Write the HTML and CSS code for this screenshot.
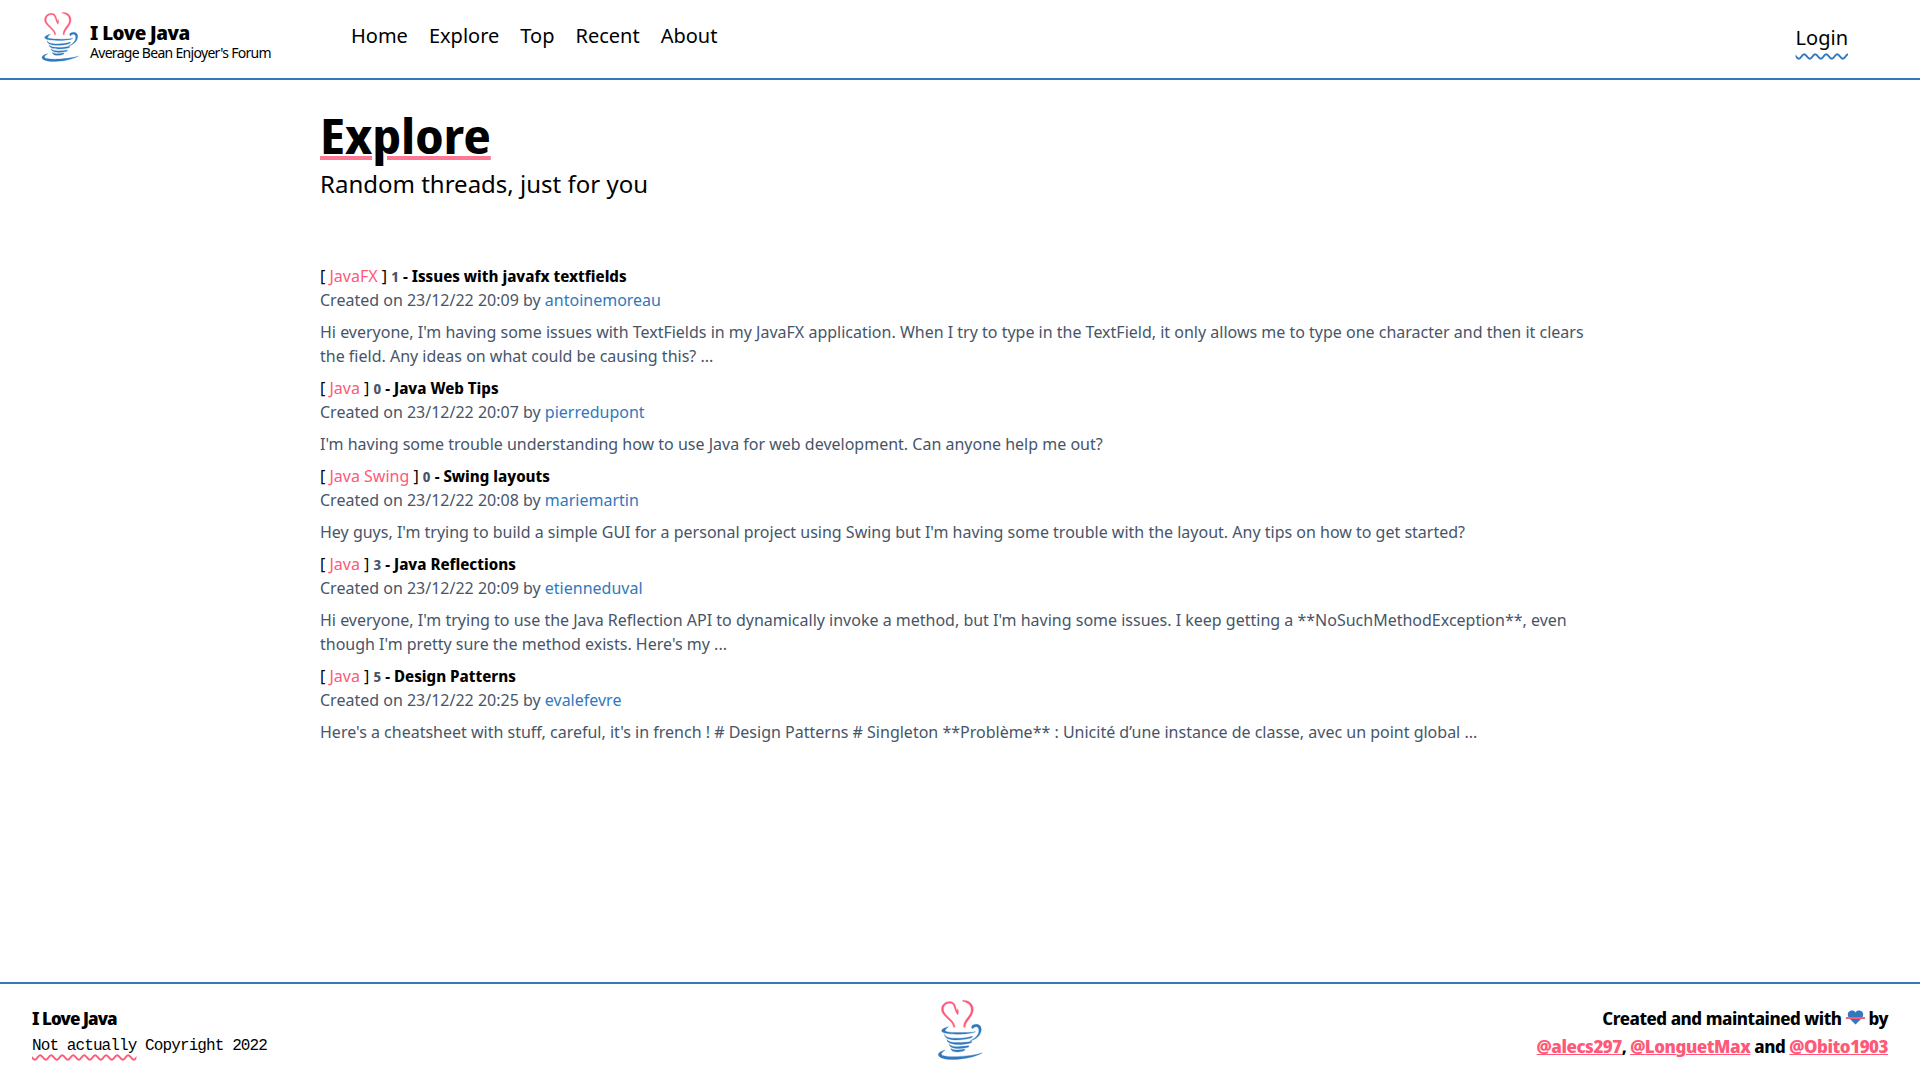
FILE: index.html
```
<!DOCTYPE html>
<html lang="en">
<head>
<meta charset="utf-8">
<meta name="viewport" content="width=device-width, initial-scale=1">
<title>I Love Java</title>
<link rel="stylesheet" href="styles.css">
</head>
<body>
<svg class="defs" aria-hidden="true">
  <symbol id="cup" viewBox="56 90 136 178">
    <g class="heart">
      <path d="M98 95C82 93 68 103 69 120C70 138 104 152 105 171L109 171C109 149 77 138 75 120C74 106 84 98 97 100C109 102 106 122 117 134C121 126 119 120 117 116L115 124C112 112 110 97 98 95Z"/>
      <path d="M132 91C151 91 166 103 163 122C160 143 141 151 139 171L135 171C133 149 156 139 157 121C158 105 148 98 132 94Z"/>
    </g>
    <g class="coffee">
      <path d="M90 169C76 172 68 177 70 183C74 194 151 194 170 184C148 188 80 188 80 181C80 177 85 173 90 169Z"/>
      <path d="M161 165C176 158 188 165 187 178C186 195 171 207 154 211C172 203 181 191 180 178C179 168 171 166 162 174C158 177 157 169 161 165Z"/>
      <path d="M78 192C82 207 129 206 159 198C164 196 160 202 156 203C122 212 78 211 78 192Z"/>
      <path d="M85 207C92 220 130 217 157 213C163 213 158 217 153 218C123 225 85 223 85 207Z"/>
      <path d="M92 221C99 231 126 229 148 226C154 226 150 230 145 231C120 236 94 235 92 221Z"/>
      <path d="M97 234C106 240 120 239 137 236C142 237 137 240 131 242C115 246 98 245 97 234Z"/>
      <path d="M80 239C63 242 55 251 63 258C83 273 154 267 190 247C159 257 83 263 70 253C66 248 73 243 80 239Z"/>
    </g>
  </symbol>
</svg>

<header class="site-header">
  <a class="brand" href="#">
    <svg class="brand-logo" aria-hidden="true"><use href="#cup"/></svg>
    <span class="brand-text">
      <span class="brand-name">I Love Java</span>
      <span class="brand-tagline">Average Bean Enjoyer's Forum</span>
    </span>
  </a>
  <nav class="main-nav">
    <a href="#">Home</a>
    <a href="#">Explore</a>
    <a href="#">Top</a>
    <a href="#">Recent</a>
    <a href="#">About</a>
  </nav>
  <a class="login" href="#">Login</a>
</header>

<main class="content">
  <h1 class="page-title">Explore</h1>
  <p class="page-subtitle">Random threads, just for you</p>

  <section class="threads">
    <article class="thread">
      <h2 class="thread-head">[ <a class="tag" href="#">JavaFX</a> ] <span class="count">1</span> <a class="thread-title" href="#">- Issues with javafx textfields</a></h2>
      <p class="meta">Created on 23/12/22 20:09 by <a href="#">antoinemoreau</a></p>
      <p class="excerpt">Hi everyone, I'm having some issues with TextFields in my JavaFX application. When I try to type in the TextField, it only allows me to type one character and then it clears the field. Any ideas on what could be causing this? ...</p>
    </article>
    <article class="thread">
      <h2 class="thread-head">[ <a class="tag" href="#">Java</a> ] <span class="count">0</span> <a class="thread-title" href="#">- Java Web Tips</a></h2>
      <p class="meta">Created on 23/12/22 20:07 by <a href="#">pierredupont</a></p>
      <p class="excerpt">I'm having some trouble understanding how to use Java for web development. Can anyone help me out?</p>
    </article>
    <article class="thread">
      <h2 class="thread-head">[ <a class="tag" href="#">Java Swing</a> ] <span class="count">0</span> <a class="thread-title" href="#">- Swing layouts</a></h2>
      <p class="meta">Created on 23/12/22 20:08 by <a href="#">mariemartin</a></p>
      <p class="excerpt">Hey guys, I'm trying to build a simple GUI for a personal project using Swing but I'm having some trouble with the layout. Any tips on how to get started?</p>
    </article>
    <article class="thread">
      <h2 class="thread-head">[ <a class="tag" href="#">Java</a> ] <span class="count">3</span> <a class="thread-title" href="#">- Java Reflections</a></h2>
      <p class="meta">Created on 23/12/22 20:09 by <a href="#">etienneduval</a></p>
      <p class="excerpt">Hi everyone, I'm trying to use the Java Reflection API to dynamically invoke a method, but I'm having some issues. I keep getting a **NoSuchMethodException**, even though I'm pretty sure the method exists. Here's my ...</p>
    </article>
    <article class="thread">
      <h2 class="thread-head">[ <a class="tag" href="#">Java</a> ] <span class="count">5</span> <a class="thread-title" href="#">- Design Patterns</a></h2>
      <p class="meta">Created on 23/12/22 20:25 by <a href="#">evalefevre</a></p>
      <p class="excerpt">Here's a cheatsheet with stuff, careful, it's in french ! # Design Patterns # Singleton **Problème** : Unicité d’une instance de classe, avec un point global ...</p>
    </article>
  </section>
</main>

<footer class="site-footer">
  <div class="legal">
    <p class="legal-name">I Love Java</p>
    <p class="copyright"><span class="wavy">Not actually</span> Copyright 2022</p>
  </div>
  <svg class="footer-logo" aria-hidden="true"><use href="#cup"/></svg>
  <div class="credits">
    <p>Created and maintained with
      <svg class="love" viewBox="0 0 19 15" role="img" aria-label="love"><path class="love-heart" d="M9.500 14.500L3 8C1 5.500 1.500 2 4 1C6 0 8.500 .5 9.500 2.500C10.500 .5 13 0 15 1C17.500 2 18 5.500 16 8Z"/><path class="love-strike" d="M0 7h19v2H0z"/></svg>
      by</p>
    <p><a href="#">@alecs297</a>, <a href="#">@LonguetMax</a> and <a href="#">@Obito1903</a></p>
  </div>
</footer>
</body>
</html>
```
FILE: styles.css
```
:root {
  --blue: #3178bd;
  --pink: #ff5879;
  --slate: #475569;
  --display: "Noto Sans Display", "Noto Sans", sans-serif;
}

* { box-sizing: border-box; }

body {
  margin: 0;
  min-height: 100vh;
  display: flex;
  flex-direction: column;
  background: #fff;
  color: #000;
  font-family: "Noto Sans", sans-serif;
  font-size: 16px;
  line-height: 24px;
}

h1, h2, p { margin: 0; }
a { color: inherit; text-decoration: none; }

.defs { position: absolute; width: 0; height: 0; }
.heart { fill: var(--pink); stroke: var(--pink); }
.coffee { fill: var(--blue); stroke: var(--blue); }

.site-header {
  display: flex;
  align-items: flex-start;
  padding: 12px 72px 16px 40px;
  border-bottom: 2px solid var(--blue);
}
.brand { display: flex; width: 311px; gap: 10px; }
.brand-logo { width: 40px; height: 50px; }
.brand-text { display: flex; flex-direction: column; padding-top: 9px; }
.brand-name { font-family: var(--display); font-size: 20px; font-weight: 800; line-height: 24px; letter-spacing: -0.025em; }
.brand-tagline { font-size: 14px; line-height: 16px; letter-spacing: -0.05em; }
.main-nav { display: flex; gap: 21px; padding-top: 10px; font-size: 20px; line-height: 28px; }
.login {
  margin-left: auto;
  padding-top: 12px;
  font-size: 20px;
  line-height: 28px;
  text-decoration: underline wavy var(--blue) 2px;
  text-underline-offset: 8px;
}

.content {
  flex: 1;
  width: 100%;
  max-width: 1280px;
  margin: 0 auto;
  padding: 32px 0;
}
.page-title {
  font-family: var(--display);
  font-size: 48px;
  line-height: 48px;
  font-weight: 700;
  text-decoration: underline #ff7893 4px;
}
.page-subtitle { margin-top: 8px; font-size: 24px; line-height: 32px; }

.threads { display: flex; flex-direction: column; gap: 8px; margin-top: 64px; }
.thread-head { font-size: 16px; font-weight: 400; line-height: 24px; }
.tag { color: var(--pink); }
.count { color: var(--slate); font-family: var(--display); font-size: 14px; font-weight: 700; line-height: 16px; }
.thread-title { font-family: var(--display); font-weight: 700; line-height: 16px; }
.meta { color: var(--slate); }
.meta a { color: var(--blue); }
.excerpt { margin-top: 8px; color: var(--slate); }

.site-footer {
  display: grid;
  grid-template-columns: 1fr auto 1fr;
  align-items: end;
  padding: 16px 32px 20px;
  border-top: 2px solid var(--blue);
}
.legal { font-size: 18px; line-height: 28px; letter-spacing: -0.05em; }
.legal-name { font-family: var(--display); font-weight: 800; }
.copyright { font-family: "Liberation Mono", monospace; font-size: 16px; }
.wavy { text-decoration: underline wavy var(--pink) 2px; text-underline-offset: 4px; }
.footer-logo { width: 46px; height: 60px; }
.credits {
  text-align: right;
  font-family: var(--display);
  font-size: 18px;
  font-weight: 700;
  line-height: 28px;
  letter-spacing: -0.025em;
}
.credits a { color: var(--pink); font-weight: 800; text-decoration: underline 1px; }
.love { width: 19px; height: 15px; }
.love-heart { fill: var(--blue); }
.love-strike { fill: var(--pink); }
```
